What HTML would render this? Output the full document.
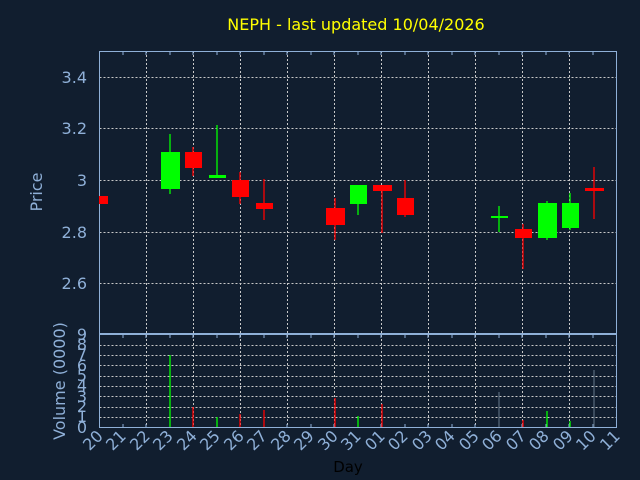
<!DOCTYPE html>
<html><head><meta charset="utf-8"><style>
html,body{margin:0;padding:0;background:#111e2f;}
svg{display:block}
text{font-family:"DejaVu Sans","Liberation Sans",sans-serif;}
</style></head><body>
<svg width="640" height="480" viewBox="0 0 640 480" xmlns="http://www.w3.org/2000/svg">
<rect width="640" height="480" fill="#111e2f"/>
<text x="356" y="30" fill="#ffff00" font-size="16" text-anchor="middle">NEPH - last updated 10/04/2026</text>
<g stroke="#c8c8c8" stroke-width="1" stroke-dasharray="2,2" fill="none">
<path d="M99.5 77.5H617M99.5 128.5H617M99.5 180.5H617M99.5 232.5H617M99.5 283.5H617"/>
<path d="M146.5 51V333M193.5 51V333M240.5 51V333M287.5 51V333M334.5 51V333M381.5 51V333M428.5 51V333M475.5 51V333M522.5 51V333M569.5 51V333"/>
<path d="M99.5 345.5H617M99.5 355.5H617M99.5 365.5H617M99.5 376.5H617M99.5 386.5H617M99.5 396.5H617M99.5 407.5H617M99.5 417.5H617"/>
<path d="M146.5 335V427M193.5 335V427M240.5 335V427M287.5 335V427M334.5 335V427M381.5 335V427M428.5 335V427M475.5 335V427M522.5 335V427M569.5 335V427"/>
</g>
<g stroke="#8fb0d8" stroke-width="1" fill="none">
<rect x="99.5" y="51.5" width="517" height="282"/>
<rect x="99.5" y="334.5" width="517" height="93"/>
<path d="M123 52v3M146 52v3M170 52v3M193 52v3M217 52v3M240 52v3M264 52v3M287 52v3M311 52v3M334 52v3M358 52v3M381 52v3M405 52v3M428 52v3M452 52v3M475 52v3M499 52v3M522 52v3M546 52v3M569 52v3M593 52v3"/>
<path d="M123 335v3M146 335v3M170 335v3M193 335v3M217 335v3M240 335v3M264 335v3M287 335v3M311 335v3M334 335v3M358 335v3M381 335v3M405 335v3M428 335v3M452 335v3M475 335v3M499 335v3M522 335v3M546 335v3M569 335v3M593 335v3"/>
<path d="M123 427v-3M146 427v-3M170 427v-3M193 427v-3M217 427v-3M240 427v-3M264 427v-3M287 427v-3M311 427v-3M334 427v-3M358 427v-3M381 427v-3M405 427v-3M428 427v-3M452 427v-3M475 427v-3M499 427v-3M522 427v-3M546 427v-3M569 427v-3M593 427v-3"/>
</g>
<g stroke-width="1.3">
<path stroke="#00ff00" d="M170 134V194M217 125V178M358 185V215M499 206V232M547 201V240M570 193V230"/>
<path stroke="#ff0000" d="M193 147V176M240 172V204M264 179V220M335 198V240M382 185V233M405 180V217M523 224V269M594 167V219"/>
</g>
<g fill="#ff0000">
<rect x="99" y="196" width="9" height="8"/>
<rect x="185" y="152" width="17" height="16"/>
<rect x="232" y="180" width="17" height="17"/>
<rect x="256" y="203" width="17" height="6"/>
<rect x="326" y="208" width="19" height="17"/>
<rect x="373" y="185" width="19" height="6"/>
<rect x="397" y="198" width="17" height="17"/>
<rect x="515" y="229" width="17" height="9"/>
<rect x="585" y="188" width="19" height="3"/>
</g>
<g fill="#00ff00">
<rect x="161" y="152" width="19" height="37"/>
<rect x="209" y="175" width="17" height="3"/>
<rect x="350" y="185" width="17" height="19"/>
<rect x="491" y="216" width="17" height="2"/>
<rect x="538" y="203" width="19" height="35"/>
<rect x="562" y="203" width="17" height="25"/>
</g>
<g stroke-width="1.3">
<path stroke="#00ff00" d="M170 355V427M217 417V427M358 416V427M547 411V427M570 421V427"/>
<path stroke="#ff0000" d="M193 407V427M240 414V427M264 410V427M335 398V427M382 404V427M523 420V427"/>
<path stroke="#556677" d="M499 392V427M594 370V427"/>
</g>
<g fill="#8fb0d8" font-size="16" text-anchor="end">
<text x="87" y="83">3.4</text>
<text x="87" y="134">3.2</text>
<text x="87" y="186">3</text>
<text x="87" y="238">2.8</text>
<text x="87" y="289">2.6</text>
<text x="87" y="340">9</text>
<text x="87" y="350">8</text>
<text x="87" y="360">7</text>
<text x="87" y="371">6</text>
<text x="87" y="381">5</text>
<text x="87" y="391">4</text>
<text x="87" y="402">3</text>
<text x="87" y="412">2</text>
<text x="87" y="422">1</text>
<text x="87" y="433">0</text>
</g>
<text transform="translate(42,192) rotate(-90)" fill="#8fb0d8" font-size="16" text-anchor="middle">Price</text>
<text transform="translate(65,381) rotate(-90)" fill="#8fb0d8" font-size="16" text-anchor="middle">Volume (0000)</text>
<g fill="#8fb0d8" font-size="16" text-anchor="end">
<text transform="translate(104,437) rotate(-45)">20</text>
<text transform="translate(127,437) rotate(-45)">21</text>
<text transform="translate(151,437) rotate(-45)">22</text>
<text transform="translate(174,437) rotate(-45)">23</text>
<text transform="translate(198,437) rotate(-45)">24</text>
<text transform="translate(221,437) rotate(-45)">25</text>
<text transform="translate(245,437) rotate(-45)">26</text>
<text transform="translate(268,437) rotate(-45)">27</text>
<text transform="translate(292,437) rotate(-45)">28</text>
<text transform="translate(315,437) rotate(-45)">29</text>
<text transform="translate(339,437) rotate(-45)">30</text>
<text transform="translate(362,437) rotate(-45)">31</text>
<text transform="translate(386,437) rotate(-45)">01</text>
<text transform="translate(409,437) rotate(-45)">02</text>
<text transform="translate(433,437) rotate(-45)">03</text>
<text transform="translate(456,437) rotate(-45)">04</text>
<text transform="translate(480,437) rotate(-45)">05</text>
<text transform="translate(503,437) rotate(-45)">06</text>
<text transform="translate(527,437) rotate(-45)">07</text>
<text transform="translate(550,437) rotate(-45)">08</text>
<text transform="translate(574,437) rotate(-45)">09</text>
<text transform="translate(597,437) rotate(-45)">10</text>
<text transform="translate(621,437) rotate(-45)">11</text>
</g>
<text x="348" y="472" fill="#000000" font-size="15" text-anchor="middle">Day</text>
</svg>
</body></html>
